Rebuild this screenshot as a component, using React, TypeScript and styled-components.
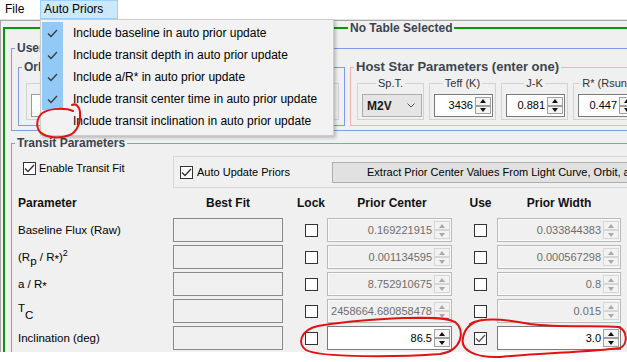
import React from 'react';
import styled, { createGlobalStyle } from 'styled-components';

const GlobalStyle = createGlobalStyle`
  *, *::before, *::after { box-sizing: border-box; }
  html, body { margin: 0; padding: 0; background: #ffffff; }
  body {
    font-family: "Liberation Sans", Arial, sans-serif;
    font-size: 12px;
    color: #000;
  }
`;

const Screen = styled.div`
  position: relative;
  width: 627px;
  height: 362px;
  overflow: hidden;
  background: #fff;
`;

const MenuBar = styled.div`
  display: flex;
  height: 20px;
  border-bottom: 1px solid #e3e3e3;
`;

const MenuTitle = styled.div<{ $active?: boolean; $width: number }>`
  width: ${p => p.$width}px;
  height: 19px;
  padding-left: ${p => (p.$active ? 3 : 4)}px;
  line-height: 17px;
  border: 1px solid ${p => (p.$active ? '#99d1ff' : 'transparent')};
  background: ${p => (p.$active ? '#cce8ff' : 'transparent')};
`;

const Window = styled.div`
  height: 332px;
  border-top: 1px solid #a6a6a6;
  border-left: 1px solid #a6a6a6;
  background: #f0f0f0;
  padding-left: 2px;
  overflow: hidden;
`;

const TableGroup = styled.fieldset`
  margin: 0;
  min-width: 0;
  width: 720px;
  height: 360px;
  padding: 6px 0 0 6px;
  border: 2px solid #0b970b;
  border-right: none;
  border-bottom: none;
`;

const GroupTitle = styled.legend<{ $size?: number; $offset?: number }>`
  margin-left: ${p => p.$offset ?? -3}px;
  padding: 0 2px;
  font-size: ${p => p.$size ?? 12}px;
  line-height: 14px;
  font-weight: bold;
  color: #3a4450;
  white-space: nowrap;
`;

const UserGroup = styled.fieldset`
  margin: 0;
  min-width: 0;
  width: 700px;
  padding: 5px 0 4px 6px;
  border: 1px solid #7f9be8;
  border-right: none;
`;

const UserRow = styled.div`
  display: flex;
  gap: 5px;
`;

const OrbitGroup = styled.fieldset`
  margin: 0;
  min-width: 0;
  width: 327px;
  flex: none;
  padding: 2px 5px 5px 7px;
  border: 1px solid #7f9be8;
`;

const HostGroup = styled.fieldset`
  margin: 0;
  min-width: 0;
  flex: 1;
  padding: 2px 0 5px 6px;
  border: 1px solid #f2b4b4;
  border-right: none;
`;

const FieldRow = styled.div`
  display: flex;
  gap: 5px;
`;

const SubGroup = styled.fieldset<{ $grow?: boolean }>`
  margin: 0;
  min-width: 0;
  width: 67px;
  flex: ${p => (p.$grow ? '1' : 'none')};
  padding: 4px 4px 2px 4px;
  border: 1px solid #d2d2d2;
`;

const SubTitle = styled.legend`
  margin: 0 auto;
  padding: 0 2px;
  font-size: 11px;
  line-height: 14px;
  color: #333;
  white-space: nowrap;
`;

const PlainInput = styled.div`
  height: 23px;
  background: #fff;
  border: 1px solid #9a9a9a;
`;

const Combo = styled.div`
  display: flex;
  align-items: center;
  justify-content: space-between;
  width: 60px;
  height: 23px;
  padding: 0 6px 0 4px;
  background: #e5e5e5;
  border: 1px solid #adadad;
  font-weight: bold;
  font-size: 12px;
  color: #1a1a1a;
`;

const TransitGroup = styled.fieldset`
  margin: 5px 0 0 0;
  min-width: 0;
  width: 700px;
  height: 300px;
  padding: 6px 0 0 6px;
  border: 1px solid #7f9be8;
  border-right: none;
  border-bottom: none;
`;

const TopRow = styled.div`
  display: flex;
  align-items: flex-start;
`;

const FitToggle = styled.label`
  display: flex;
  align-items: center;
  flex: none;
  gap: 3px;
  width: 155px;
  margin-top: 6px;
  padding-left: 5px;
  font-size: 11px;
  line-height: 13px;
`;

const AutoBox = styled.div`
  display: flex;
  align-items: center;
  flex: none;
  width: 620px;
  height: 32px;
  padding-left: 6px;
  border: 1px solid #d5d5d5;
`;

const AutoToggle = styled.label`
  display: flex;
  align-items: center;
  flex: none;
  gap: 4px;
  width: 152px;
  font-size: 11px;
`;

const WideButton = styled.div`
  flex: none;
  width: 440px;
  height: 21px;
  padding-left: 34px;
  line-height: 19px;
  background: #e1e1e1;
  border: 1px solid #adadad;
  font-size: 11px;
  white-space: nowrap;
`;

const ParamGrid = styled.div<{ $header?: boolean }>`
  display: grid;
  grid-template-columns: 155px 110px 44px 125px 45px 124px;
  grid-auto-rows: ${p => (p.$header ? '14px' : '24px')};
  row-gap: 3px;
  margin-top: 8px;
`;

const HeadCell = styled.div<{ $align?: string; $shift?: number }>`
  text-align: ${p => p.$align ?? 'center'};
  padding-left: ${p => p.$shift ?? 0}px;
  font-weight: bold;
  font-size: 12px;
  line-height: 14px;
  color: #111;
`;

const RowLabel = styled.div`
  align-self: center;
  font-size: 11.5px;
  line-height: 14px;
  white-space: nowrap;
`;

const Sub = styled.span<{ $drop?: number }>`
  position: relative;
  top: ${p => p.$drop ?? 4}px;
  font-size: 11.5px;
`;

const Sup = styled.span`
  position: relative;
  top: -5px;
  font-size: 9px;
`;

const Raise = styled.span`
  position: relative;
  top: -3px;
`;

const BestFit = styled.div`
  border: 1px solid #8a8a8a;
  background: #f0f0f0;
`;

const CheckCell = styled.div`
  align-self: center;
  justify-self: start;
  margin-left: 22px;
  display: flex;
`;

const Box = styled.span`
  display: inline-flex;
  align-items: center;
  justify-content: center;
  flex: none;
  width: 13px;
  height: 13px;
  border: 1px solid #333;
  background: #fff;
`;

const NumBox = styled.div<{ $disabled?: boolean; $width: number; $height: number }>`
  display: flex;
  width: ${p => p.$width}px;
  height: ${p => p.$height}px;
  padding: 1px;
  border: 1px solid ${p => (p.$disabled ? '#b9b9b9' : '#7a7a7a')};
  background: ${p => (p.$disabled ? '#f0f0f0' : '#fff')};
  box-shadow: ${p => (p.$disabled ? 'inset 0 0 0 1px #fafafa' : 'none')};
`;

const NumText = styled.span<{ $disabled?: boolean }>`
  flex: 1;
  align-self: center;
  padding-right: 2px;
  text-align: right;
  font-size: 11px;
  line-height: 13px;
  white-space: nowrap;
  overflow: hidden;
  color: ${p => (p.$disabled ? '#6d6d6d' : '#000')};
`;

const SpinCol = styled.div`
  display: flex;
  flex-direction: column;
  width: 16px;
  flex: none;
  padding: 1px 0;
`;

const SpinButton = styled.div<{ $disabled?: boolean }>`
  flex: 1;
  display: flex;
  align-items: center;
  justify-content: center;
  border: 1px solid ${p => (p.$disabled ? '#d6d6d6' : '#a0a0a0')};
  background: ${p => (p.$disabled ? '#f2f2f2' : '#f4f4f4')};
`;

const Arrow = styled.span<{ $down?: boolean; $disabled?: boolean }>`
  width: 0;
  height: 0;
  border-left: 3.5px solid transparent;
  border-right: 3.5px solid transparent;
  ${p =>
    p.$down
      ? `border-top: 4px solid ${p.$disabled ? '#a8a8a8' : '#111'};`
      : `border-bottom: 4px solid ${p.$disabled ? '#a8a8a8' : '#111'};`}
`;

const Dropdown = styled.div`
  position: absolute;
  left: 40px;
  top: 19px;
  width: 294px;
  height: 117px;
  padding: 2px 0;
  background: #f2f2f2;
  border: 1px solid #cccccc;
  box-shadow: 2px 2px 3px rgba(0, 0, 0, 0.22);
`;

const DropItem = styled.div`
  display: flex;
  align-items: center;
  height: 22px;
`;

const CheckMarkCell = styled.div<{ $checked: boolean }>`
  display: flex;
  align-items: center;
  justify-content: center;
  width: 21px;
  height: 22px;
  margin-left: 1px;
  background: ${p => (p.$checked ? '#91c9f7' : 'transparent')};
`;

const DropText = styled.span`
  margin-left: 10px;
  font-size: 12px;
  color: #000;
  white-space: nowrap;
`;

const Annotations = styled.svg`
  position: absolute;
  left: 0;
  top: 0;
  pointer-events: none;
`;

const Tick = ({ color = '#333' }: { color?: string }) => (
  <svg width="11" height="9" viewBox="0 0 11 9">
    <polyline points="1,4.5 4,7.5 10,1" fill="none" stroke={color} strokeWidth="1.3" />
  </svg>
);

const CheckBox = ({ checked, color }: { checked?: boolean; color?: string }) => (
  <Box>{checked && <Tick color={color} />}</Box>
);

const Spinner = ({
  value,
  disabled,
  width,
  height = 24,
}: {
  value: string;
  disabled?: boolean;
  width: number;
  height?: number;
}) => (
  <NumBox $disabled={disabled} $width={width} $height={height}>
    <NumText $disabled={disabled}>{value}</NumText>
    <SpinCol>
      <SpinButton $disabled={disabled}>
        <Arrow $disabled={disabled} />
      </SpinButton>
      <SpinButton $disabled={disabled}>
        <Arrow $down $disabled={disabled} />
      </SpinButton>
    </SpinCol>
  </NumBox>
);

const menuItems = [
  { text: 'Include baseline in auto prior update', checked: true },
  { text: 'Include transit depth in auto prior update', checked: true },
  { text: 'Include a/R* in auto prior update', checked: true },
  { text: 'Include transit center time in auto prior update', checked: true },
  { text: 'Include transit inclination in auto prior update', checked: false },
];

const rows = [
  { label: <>Baseline Flux (Raw)</>, center: '0.169221915', width: '0.033844383' },
  {
    label: (
      <>
        (R<Sub>p</Sub> / R<Sub $drop={2}>*</Sub>)<Sup>2</Sup>
      </>
    ),
    center: '0.001134595',
    width: '0.000567298',
  },
  {
    label: (
      <>
        a / R<Sub $drop={2}>*</Sub>
      </>
    ),
    center: '8.752910675',
    width: '0.8',
  },
  {
    label: (
      <>
        <Raise>T</Raise>
        <Sub $drop={4}>C</Sub>
      </>
    ),
    center: '2458664.680858478',
    width: '0.015',
  },
  { label: <>Inclination (deg)</>, center: '86.5', width: '3.0', active: true },
];

export default function App() {
  return (
    <Screen>
      <GlobalStyle />
      <MenuBar>
        <MenuTitle $width={40}>File</MenuTitle>
        <MenuTitle $width={78} $active>
          Auto Priors
        </MenuTitle>
      </MenuBar>

      <Window>
        <TableGroup>
          <GroupTitle $offset={337}>No Table Selected</GroupTitle>

          <UserGroup>
            <GroupTitle>User Parameters</GroupTitle>
            <UserRow>
              <OrbitGroup>
                <GroupTitle $offset={-4}>Orbital Parameters</GroupTitle>
                <FieldRow>
                  <SubGroup $grow>
                    <SubTitle>Period</SubTitle>
                    <PlainInput />
                  </SubGroup>
                  <SubGroup $grow>
                    <SubTitle>Tc</SubTitle>
                    <PlainInput />
                  </SubGroup>
                  <SubGroup $grow>
                    <SubTitle>Duration</SubTitle>
                    <PlainInput />
                  </SubGroup>
                </FieldRow>
              </OrbitGroup>

              <HostGroup>
                <GroupTitle $size={13}>Host Star Parameters (enter one)</GroupTitle>
                <FieldRow>
                  <SubGroup>
                    <SubTitle>Sp.T.</SubTitle>
                    <Combo>
                      M2V
                      <svg width="8" height="5" viewBox="0 0 8 5">
                        <polyline points="0.5,0.5 4,4 7.5,0.5" fill="none" stroke="#555" strokeWidth="1" />
                      </svg>
                    </Combo>
                  </SubGroup>
                  <SubGroup>
                    <SubTitle>Teff (K)</SubTitle>
                    <Spinner value="3436" width={59} height={23} />
                  </SubGroup>
                  <SubGroup>
                    <SubTitle>J-K</SubTitle>
                    <Spinner value="0.881" width={59} height={23} />
                  </SubGroup>
                  <SubGroup>
                    <SubTitle>R* (Rsun)</SubTitle>
                    <Spinner value="0.447" width={59} height={23} />
                  </SubGroup>
                </FieldRow>
              </HostGroup>
            </UserRow>
          </UserGroup>

          <TransitGroup>
            <GroupTitle>Transit Parameters</GroupTitle>
            <TopRow>
              <FitToggle>
                <CheckBox checked />
                Enable Transit Fit
              </FitToggle>
              <AutoBox>
                <AutoToggle>
                  <CheckBox checked />
                  Auto Update Priors
                </AutoToggle>
                <WideButton>Extract Prior Center Values From Light Curve, Orbit, and Host Star</WideButton>
              </AutoBox>
            </TopRow>

            <ParamGrid $header>
              <HeadCell $align="left">Parameter</HeadCell>
              <HeadCell>Best Fit</HeadCell>
              <HeadCell $shift={12}>Lock</HeadCell>
              <HeadCell $shift={5}>Prior Center</HeadCell>
              <HeadCell $shift={12}>Use</HeadCell>
              <HeadCell>Prior Width</HeadCell>
            </ParamGrid>

            <ParamGrid>
              {rows.map((r, i) => (
                <React.Fragment key={i}>
                  <RowLabel>{r.label}</RowLabel>
                  <BestFit />
                  <CheckCell>
                    <CheckBox />
                  </CheckCell>
                  <Spinner value={r.center} disabled={!r.active} width={125} />
                  <CheckCell>
                    <CheckBox checked={r.active} color="#555" />
                  </CheckCell>
                  <Spinner value={r.width} disabled={!r.active} width={124} />
                </React.Fragment>
              ))}
            </ParamGrid>
          </TransitGroup>
        </TableGroup>
      </Window>

      <Dropdown>
        {menuItems.map(item => (
          <DropItem key={item.text}>
            <CheckMarkCell $checked={item.checked}>{item.checked && <Tick color="#3a3a3a" />}</CheckMarkCell>
            <DropText>{item.text}</DropText>
          </DropItem>
        ))}
      </Dropdown>

      <Annotations width="627" height="362" viewBox="0 0 627 362">
        <g fill="none" stroke="#e31212" strokeWidth="2" strokeLinecap="round">
          <path d="M 73 111 C 66 108, 52 108, 44 112 C 37 116, 35 126, 40 132 C 46 138, 60 139, 70 135 C 78 131, 81 121, 80 112 C 79 106, 76 103, 72 105" />
          <path d="M 448 319 C 420 316, 360 319, 318 326 C 300 330, 297 344, 306 350 C 320 358, 400 357, 440 354 C 462 351, 466 330, 455 322 C 445 317, 430 318, 420 318" />
          <path d="M 470 324 C 480 318, 500 318, 530 324 C 560 328, 600 325, 618 327 C 628 330, 628 345, 620 348 C 590 352, 540 353, 500 357 C 475 358, 460 350, 463 338 C 464 330, 470 322, 482 320" />
        </g>
      </Annotations>
    </Screen>
  );
}
